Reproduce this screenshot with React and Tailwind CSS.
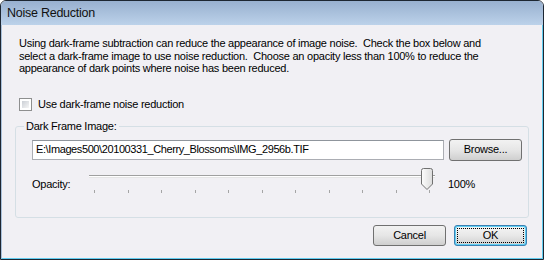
export default function App() {
  const ticks = Array.from({ length: 11 });
  return (
    <div className="w-[544px] h-[260px] font-['Liberation_Sans',Arial,sans-serif] text-[11px] tracking-[-0.25px] text-black">
      <div className="w-full h-full flex flex-col border border-[#1d2631] rounded-t-[6px] overflow-hidden">
        <div className="h-[24px] shrink-0 bg-gradient-to-b from-[#98b0cf] to-[#bcd2ea] pl-[6px] flex items-center text-[12.5px] text-[#111]">
          Noise Reduction
        </div>
        <div className="flex-1 flex flex-col bg-[#f1f0f4] border-l border-r border-b border-l-[#a9c1db] border-r-[#62cdf0] border-b-[#62cdf0] pl-[17px] pr-[14px]">
          <p className="mt-[12px] leading-[12.5px] whitespace-nowrap">
            Using dark-frame subtraction can reduce the appearance of image noise.&nbsp; Check the box below and
            <br />
            select a dark-frame image to use noise reduction.&nbsp; Choose an opacity less than 100% to reduce the
            <br />
            appearance of dark points where noise has been reduced.
          </p>
          <div className="mt-[23px] flex items-center h-[13px]">
            <div className="w-[13px] h-[13px] border border-[#8e8f8f] bg-white p-[2px]">
              <div className="w-full h-full bg-gradient-to-br from-[#cbcfd5] to-[#f6f6f6]" />
            </div>
            <span className="ml-[6px]">Use dark-frame noise reduction</span>
          </div>
          <fieldset className="mt-[9px] -ml-[4px] w-[514px] h-[98px] border border-[#d5dfe5] rounded-[3px] pl-[16px] pr-[6px]">
            <legend className="ml-[-8px] px-[2px] leading-[13px]">Dark Frame Image:</legend>
            <div className="mt-[6px] flex items-center">
              <div className="w-[412px] h-[20px] bg-white border border-[#abadb3] border-t-[#8f959c] flex items-center pl-[3px] tracking-[-0.4px] whitespace-nowrap">
                E:\Images500\20100331_Cherry_Blossoms\IMG_2956b.TIF
              </div>
              <button className="ml-[5px] w-[73px] h-[22px] rounded-[3px] border border-[#707070] bg-gradient-to-b from-[#f2f2f2] via-[#e6e6e6] to-[#cfcfcf] flex items-center justify-center">
                Browse...
              </button>
            </div>
            <div className="mt-[7px] flex items-start">
              <span className="mt-[8px] w-[57px]">Opacity:</span>
              <div className="relative w-[346px] h-[26px]">
                <div className="absolute left-0 right-0 top-[7px] h-[3px] border-t border-[#a0a0a0] bg-white border-b border-b-[#e5e5e5]" />
                <svg className="absolute left-[332px] top-0" width="12" height="22" viewBox="0 0 12 22">
                  <defs>
                    <linearGradient id="tg" x1="0" y1="0" x2="1" y2="0">
                      <stop offset="0" stopColor="#fdfdfd" />
                      <stop offset="1" stopColor="#dcdcdc" />
                    </linearGradient>
                  </defs>
                  <path d="M2.5 0.5 H9.5 Q11.5 0.5 11.5 2.5 V16 L6 21.5 L0.5 16 V2.5 Q0.5 0.5 2.5 0.5 Z" fill="url(#tg)" stroke="#707070" />
                </svg>
                <div className="absolute left-[5px] right-[5px] top-[22px] flex justify-between">
                  {ticks.map((_, i) => (
                    <div key={i} className="w-px h-[3px] bg-[#a5a5a5]" />
                  ))}
                </div>
              </div>
              <span className="ml-[13px] mt-[8px]">100%</span>
            </div>
          </fieldset>
          <div className="mt-[7px] flex justify-end gap-[8px] pr-[1px]">
            <button className="w-[73px] h-[21px] rounded-[3px] border border-[#707070] bg-gradient-to-b from-[#f2f2f2] via-[#e6e6e6] to-[#cfcfcf] flex items-center justify-center">
              Cancel
            </button>
            <button className="w-[73px] h-[21px] rounded-[3px] border border-[#3c7fb1] bg-[#5fd0f5] p-px">
              <div className="w-full h-full rounded-[2px] bg-gradient-to-b from-[#f4f4f4] via-[#e8e8e8] to-[#d3d3d3] p-px">
                <div className="w-full h-full border border-dotted border-black flex items-center justify-center">OK</div>
              </div>
            </button>
          </div>
        </div>
      </div>
    </div>
  );
}
